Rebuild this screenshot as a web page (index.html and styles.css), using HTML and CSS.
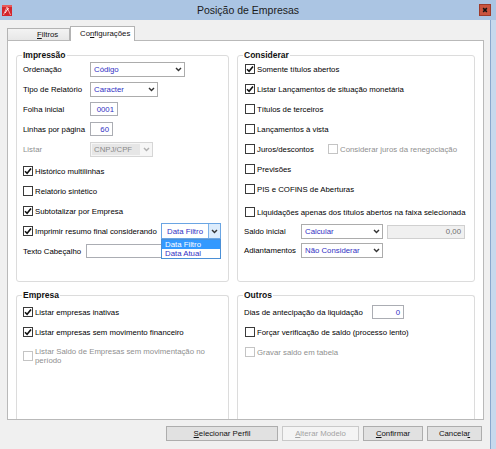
FILE: index.html
```html
<!DOCTYPE html>
<html lang="pt">
<head>
<meta charset="utf-8">
<title>Posição de Empresas</title>
<link rel="stylesheet" href="styles.css">
</head>
<body>
<div class="window">
  <header class="titlebar">
    <svg class="app-icon" viewBox="0 0 10 11"><rect width="10" height="11" fill="#d3262c"/><path d="M1.5 10 L5 2 L8.5 10" stroke="#f4a3a3" stroke-width="1" fill="none"/><path d="M3 8 L6.5 3" stroke="#fff" stroke-width="1"/><rect x="0" y="0" width="10" height="2" fill="#e85a5a"/></svg>
    <span class="title">Posição de Empresas</span>
    <span class="close"><svg viewBox="0 0 8 8"><path d="M1.5 1.5 L6.5 6.5 M6.5 1.5 L1.5 6.5" stroke="#111" stroke-width="1.9"/></svg></span>
  </header>
  <div class="main">
    <div class="client">
      <div class="tabs">
        <div class="tab"><span class="u">F</span>iltros</div>
        <div class="tab active">Co<span class="u">n</span>figurações</div>
      </div>
      <div class="panel">
        <fieldset class="group">
          <legend>Impressão</legend>
          <div class="gbody">
            <div class="row">
              <span class="lbl w67">Ordenação</span>
              <div class="combo w95"><span class="val">Código</span><span class="arr"><svg class="chev" viewBox="0 0 7 5"><path d="M1 1 L3.5 3.6 L6 1"/></svg></span></div>
            </div>
            <div class="row">
              <span class="lbl w67">Tipo de Relatório</span>
              <div class="combo w68"><span class="val">Caracter</span><span class="arr"><svg class="chev" viewBox="0 0 7 5"><path d="M1 1 L3.5 3.6 L6 1"/></svg></span></div>
            </div>
            <div class="row">
              <span class="lbl w67">Folha inicial</span>
              <div class="edit w28">0001</div>
            </div>
            <div class="row">
              <span class="lbl w67">Linhas por página</span>
              <div class="edit w23">60</div>
            </div>
            <div class="row dis">
              <span class="lbl w67">Listar</span>
              <div class="combo disabled w63"><span class="val">CNPJ/CPF</span><span class="arr"><svg class="chev" viewBox="0 0 7 5"><path d="M1 1 L3.5 3.6 L6 1"/></svg></span></div>
            </div>
            <div class="row chk gap2"><span class="cb"><svg viewBox="0 0 8 8"><path d="M1 4.2 L3.1 6.3 L7 1.4"/></svg></span><span class="t">Histórico multilinhas</span></div>
            <div class="row chk"><span class="cb"></span><span class="t">Relatório sintético</span></div>
            <div class="row chk"><span class="cb"><svg viewBox="0 0 8 8"><path d="M1 4.2 L3.1 6.3 L7 1.4"/></svg></span><span class="t">Subtotalizar por Empresa</span></div>
            <div class="row chk">
              <span class="cb"><svg viewBox="0 0 8 8"><path d="M1 4.2 L3.1 6.3 L7 1.4"/></svg></span><span class="t">Imprimir resumo final considerando</span>
              <div class="combo focus w60 push">
                <span class="val">Data Filtro</span>
                <span class="arr"><svg class="chev" viewBox="0 0 7 5"><path d="M1 1 L3.5 3.6 L6 1"/></svg></span>
                <div class="dropdown">
                  <div class="opt sel">Data Filtro</div>
                  <div class="opt">Data Atual</div>
                </div>
              </div>
            </div>
            <div class="row">
              <span class="lbl w63">Texto Cabeçalho</span>
              <div class="edit w129"></div>
            </div>
          </div>
        </fieldset>

        <fieldset class="group">
          <legend>Considerar</legend>
          <div class="gbody pad1">
            <div class="row chk"><span class="cb"><svg viewBox="0 0 8 8"><path d="M1 4.2 L3.1 6.3 L7 1.4"/></svg></span><span class="t">Somente títulos abertos</span></div>
            <div class="row chk"><span class="cb"><svg viewBox="0 0 8 8"><path d="M1 4.2 L3.1 6.3 L7 1.4"/></svg></span><span class="t">Listar Lançamentos de situação monetária</span></div>
            <div class="row chk"><span class="cb"></span><span class="t">Títulos de terceiros</span></div>
            <div class="row chk"><span class="cb"></span><span class="t">Lançamentos à vista</span></div>
            <div class="row">
              <span class="chk w83"><span class="cb"></span><span class="t">Juros/descontos</span></span>
              <span class="chk dis"><span class="cb"></span><span class="t">Considerar juros da renegociação</span></span>
            </div>
            <div class="row chk"><span class="cb"></span><span class="t">Previsões</span></div>
            <div class="row chk"><span class="cb"></span><span class="t">PIS e COFINS de Aberturas</span></div>
            <div class="row chk gap3"><span class="cb"></span><span class="t">Liquidações apenas dos títulos abertos na faixa selecionada</span></div>
            <div class="row h19 unpad">
              <span class="lbl w57">Saldo inicial</span>
              <div class="combo w82"><span class="val">Calcular</span><span class="arr"><svg class="chev" viewBox="0 0 7 5"><path d="M1 1 L3.5 3.6 L6 1"/></svg></span></div>
              <div class="edit disabled w78">0,00</div>
            </div>
            <div class="row h19 unpad">
              <span class="lbl w57">Adiantamentos</span>
              <div class="combo w82"><span class="val">Não Considerar</span><span class="arr"><svg class="chev" viewBox="0 0 7 5"><path d="M1 1 L3.5 3.6 L6 1"/></svg></span></div>
            </div>
          </div>
        </fieldset>

        <fieldset class="group bottom">
          <legend>Empresa</legend>
          <div class="gbody low">
            <div class="row chk"><span class="cb"><svg viewBox="0 0 8 8"><path d="M1 4.2 L3.1 6.3 L7 1.4"/></svg></span><span class="t">Listar empresas inativas</span></div>
            <div class="row chk"><span class="cb"><svg viewBox="0 0 8 8"><path d="M1 4.2 L3.1 6.3 L7 1.4"/></svg></span><span class="t">Listar empresas sem movimento financeiro</span></div>
            <div class="row tall chk dis"><span class="cb"></span><span class="t two">Listar Saldo de Empresas sem movimentação no período</span></div>
          </div>
        </fieldset>

        <fieldset class="group bottom">
          <legend>Outros</legend>
          <div class="gbody low">
            <div class="row">
              <span class="lbl w128">Dias de antecipação da liquidação</span>
              <div class="edit w32">0</div>
            </div>
            <div class="row chk pad1"><span class="cb"></span><span class="t">Forçar verificação de saldo (processo lento)</span></div>
            <div class="row chk dis pad1"><span class="cb"></span><span class="t">Gravar saldo em tabela</span></div>
          </div>
        </fieldset>
      </div>
      <div class="buttons">
        <div class="btn w112"><span class="u">S</span>elecionar Perfil</div>
        <div class="btn disabled w77"><span class="u">A</span>lterar Modelo</div>
        <div class="btn w60"><span class="u">C</span>onfirmar</div>
        <div class="btn w55">Cancela<span class="u">r</span></div>
      </div>
    </div>
  </div>
</div>
</body>
</html>
```

FILE: styles.css
```css
* { box-sizing: border-box; }

body {
  margin: 0;
  font-family: "Liberation Sans", Arial, sans-serif;
  font-size: 7.8px;
  color: #000;
  background: #f0f0f0;
}

.window {
  width: 496px;
  height: 449px;
  display: flex;
  flex-direction: column;
  background: #f0f0f0;
  overflow: hidden;
}

/* title bar */
.titlebar {
  flex: none;
  height: 20px;
  background: #abc5e3;
  display: grid;
  grid-template-columns: 1fr auto 1fr;
  align-items: center;
}
.app-icon { width: 10px; height: 11px; margin-left: 2px; }
.title {
  font-size: 10.5px;
  line-height: 12px;
  color: #1b1b1b;
}
.close {
  justify-self: end;
  margin-right: 5px;
  width: 12px;
  height: 12px;
  background: #c9543f;
  border: 1px solid #9e3b2b;
  display: flex;
  align-items: center;
  justify-content: center;
}
.close svg { width: 6px; height: 6px; }

/* window body with right frame */
.main {
  flex: 1;
  display: flex;
  border-right: 5px solid #c7d9ed;
}
.client {
  flex: 1;
  display: flex;
  flex-direction: column;
  padding: 6px 6px 0 7px;
  border-right: 1px solid #8ba8cd;
}

/* tabs */
.tabs {
  flex: none;
  display: flex;
  height: 15px;
  position: relative;
  z-index: 1;
  margin-bottom: -1px;
}
.tab {
  margin-top: 2px;
  height: 12px;
  width: 63px;
  border: 1px solid #b3b3b3;
  border-bottom: none;
  background: linear-gradient(#f3f3f3, #e7e7e7);
  display: flex;
  align-items: center;
  padding-left: 29px;
  color: #111;
}
.tab.active {
  margin-top: 0;
  height: 15px;
  width: 65px;
  background: #fff;
  padding-left: 9px;
  padding-bottom: 1px;
}
.u { text-decoration: underline; }

/* tab page */
.panel {
  flex: none;
  height: 380px;
  background: #fff;
  border: 1px solid #b9b9b9;
  padding: 9px 8px 0;
  display: grid;
  grid-template-columns: 213px 238px;
  grid-template-rows: 232px 129px;
  gap: 8px;
}

.group {
  margin: 0;
  padding: 0 6px;
  border: 1px solid #dcdcdc;
  border-radius: 3px;
  min-width: 0;
}
.group.bottom {
  border-bottom: none;
  border-radius: 3px 3px 0 0;
}
.group legend {
  font-weight: bold;
  font-size: 8.5px;
  line-height: 10px;
  padding: 0 1px;
  margin-left: -1px;
  color: #111;
}

.gbody {
  display: flex;
  flex-direction: column;
  margin-top: -1px;
}
.gbody.low { margin-top: 2px; }
.pad1 { padding-left: 1px; }
.unpad { margin-left: -1px; }

.row {
  flex: none;
  height: 20px;
  display: flex;
  align-items: center;
  white-space: nowrap;
}
.row.h19 { height: 19px; }
.row.gap2 { margin-top: 2px; }
.row.gap3 { margin-top: 3px; }
.row.tall { height: 28px; }

.lbl { flex: none; }
.w23 { width: 23px; }
.w28 { width: 28px; }
.w32 { width: 32px; }
.w55 { width: 55px; }
.w57 { width: 57px; }
.w60 { width: 60px; }
.w63 { width: 63px; }
.w67 { width: 67px; }
.w68 { width: 68px; }
.w77 { width: 77px; }
.w78 { width: 78px; }
.w82 { width: 82px; }
.w83 { width: 83px; }
.w95 { width: 95px; }
.w112 { width: 112px; }
.w128 { width: 128px; }
.w129 { width: 129px; }

/* combo boxes */
.combo {
  flex: none;
  position: relative;
  height: 15px;
  border: 1px solid #acacac;
  background: #fff;
  display: flex;
  align-items: center;
  color: #3131c4;
}
.combo .val {
  flex: 1;
  padding-left: 3px;
  white-space: nowrap;
  overflow: hidden;
}
.combo .arr {
  flex: none;
  width: 12px;
  height: 100%;
  display: flex;
  align-items: center;
  justify-content: center;
}
.chev {
  width: 7px;
  height: 5px;
  fill: none;
  stroke: #333;
  stroke-width: 1.4;
}
.combo.disabled {
  border-color: #d6d6d6;
  background: #f6f6f6;
  color: #8a8a8a;
}
.combo.disabled .val {
  background: #e6e6e6;
  align-self: stretch;
  display: flex;
  align-items: center;
  margin: 1px 0 1px 1px;
  padding-left: 2px;
}
.combo.disabled .chev { stroke: #b0b0b0; }

.combo.focus {
  height: 16px;
  border-color: #6aa5e3;
}
.combo.focus .val { padding-left: 5px; }
.combo.focus .arr {
  background: #dcecfc;
  border-left: 1px solid #7eb4ea;
}
.push { margin-left: auto; margin-right: 1px; }

.dropdown {
  position: absolute;
  top: calc(100% + 1px);
  left: -1px;
  width: 60px;
  border: 1px solid #4a8fd6;
  background: #fff;
  z-index: 2;
}
.opt {
  height: 9px;
  line-height: 9px;
  padding-left: 3px;
  color: #3131c4;
}
.opt.sel {
  background: #3399ff;
  color: #fff;
}

/* edits */
.edit {
  flex: none;
  height: 14px;
  border: 1px solid #abadb3;
  background: #fff;
  color: #3131c4;
  display: flex;
  align-items: center;
  justify-content: flex-end;
  padding-right: 3px;
}
.edit.disabled {
  margin-left: 4px;
  border-color: #d0d0d0;
  background: #f0f0f0;
  color: #6e6e6e;
}

/* check boxes */
.chk { display: flex; align-items: center; }
.cb {
  flex: none;
  width: 10px;
  height: 10px;
  border: 1px solid #3a3a3a;
  background: #fff;
  display: flex;
  align-items: center;
  justify-content: center;
}
.cb svg {
  width: 8px;
  height: 8px;
  fill: none;
  stroke: #111;
  stroke-width: 1.6;
}
.chk .t { margin-left: 2px; }
.dis { color: #8f8f8f; }
.dis .cb { border-color: #c4c4c4; }
.t.two {
  white-space: normal;
  width: 182px;
  line-height: 9.5px;
}

/* buttons */
.buttons {
  flex: none;
  display: flex;
  justify-content: flex-end;
  gap: 4px;
  margin-top: 6px;
  padding-right: 2px;
}
.btn {
  height: 15px;
  border: 1px solid #adadad;
  background: #e1e1e1;
  display: flex;
  align-items: center;
  justify-content: center;
  color: #111;
}
.btn.disabled {
  border-color: #c9c9c9;
  background: #f4f4f4;
  color: #a3a3a3;
}
```
